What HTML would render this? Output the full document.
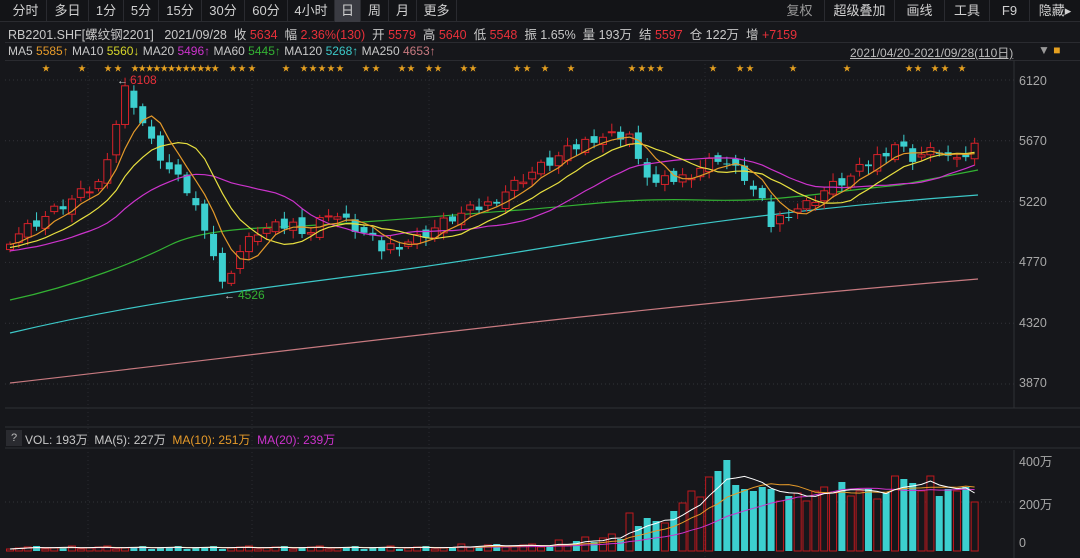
<!DOCTYPE html>
<html><head><meta charset="utf-8">
<style>
*{margin:0;padding:0;box-sizing:border-box}
body{width:1080px;height:558px;background:#16171b;overflow:hidden;font-family:"Liberation Sans","Noto Sans CJK SC",sans-serif;color:#c8c8c8;position:relative}
.tb{position:absolute;left:0;top:0;width:1080px;height:22px;background:#131417;border-bottom:1px solid #2a2b30}
.tb span{position:absolute;top:0;height:22px;line-height:22px;font-size:13px;color:#d0d0d0;text-align:center;border-right:1px solid #2a2b30}
.row{position:absolute;left:0;white-space:nowrap;font-size:12.5px}
.r{color:#e8303a}.o{color:#e59a2a}.y{color:#d6d62a}.m{color:#cc33cc}.g{color:#33b233}.c{color:#3cc8c8}.p{color:#c87a80}
.ax{position:absolute;left:1019px;font-size:12.5px;color:#a8a8a8}
</style></head><body>
<div class="tb">
<span style="left:5px;width:42px">分时</span>
<span style="left:47px;width:42px">多日</span>
<span style="left:89px;width:35px">1分</span>
<span style="left:124px;width:35px">5分</span>
<span style="left:159px;width:43px">15分</span>
<span style="left:202px;width:43px">30分</span>
<span style="left:245px;width:43px">60分</span>
<span style="left:288px;width:47px">4小时</span>
<span style="left:335px;width:26px;background:#3a3b42">日</span>
<span style="left:361px;width:28px">周</span>
<span style="left:389px;width:28px">月</span>
<span style="left:417px;width:40px">更多</span>
<span style="left:775px;width:50px;color:#999">复权</span>
<span style="left:825px;width:70px">超级叠加</span>
<span style="left:895px;width:50px">画线</span>
<span style="left:945px;width:45px">工具</span>
<span style="left:990px;width:40px">F9</span>
<span style="left:1030px;width:50px;border:none">隐藏▸</span>
</div>
<div class="row" style="top:24px;left:8px">RB2201.SHF[螺纹钢2201] &nbsp; 2021/09/28 &nbsp;收 <span class="r">5634</span> &nbsp;幅 <span class="r">2.36%(130)</span> &nbsp;开 <span class="r">5579</span> &nbsp;高 <span class="r">5640</span> &nbsp;低 <span class="r">5548</span> &nbsp;振 1.65% &nbsp;量 193万 &nbsp;结 <span class="r">5597</span> &nbsp;仓 122万 &nbsp;增 <span class="r">+7159</span></div>
<div style="position:absolute;left:5px;top:42px;width:1075px;height:1px;background:#2a2b30"></div>
<div class="row" style="top:44px;left:8px;font-size:12px">MA5 <span class="o">5585↑</span> MA10 <span class="y">5560↓</span> MA20 <span class="m">5496↑</span> MA60 <span class="g">5445↑</span> MA120 <span class="c">5268↑</span> MA250 <span class="p">4653↑</span></div>
<div class="row" style="top:44px;left:850px;font-size:12px;color:#bbb;text-decoration:underline">2021/04/20-2021/09/28(110日)</div>
<div class="row" style="top:43px;left:1038px;font-size:12px;color:#999">▼ <span style="color:#e5a020">■</span></div>
<div style="position:absolute;left:5px;top:60px;width:1075px;height:1px;background:#2a2b30"></div>
<div class="ax" style="top:74px">6120</div>
<div class="ax" style="top:134px">5670</div>
<div class="ax" style="top:195px">5220</div>
<div class="ax" style="top:255px">4770</div>
<div class="ax" style="top:316px">4320</div>
<div class="ax" style="top:376px">3870</div>
<div class="ax" style="top:451px">400万</div>
<div class="ax" style="top:494px">200万</div>
<div class="ax" style="top:536px">0</div>
<div style="position:absolute;left:6px;top:430px;width:16px;height:16px;background:#2a2b30;color:#bbb;font-size:11px;text-align:center;line-height:16px">?</div>
<div class="row" style="top:431px;left:25px;font-size:12px">VOL: 193万 &nbsp;MA(5): 227万 &nbsp;<span class="o">MA(10): 251万</span> &nbsp;<span class="m">MA(20): 239万</span></div>
<svg id="s" width="1080" height="558" style="position:absolute;left:0;top:0" xmlns="http://www.w3.org/2000/svg"></svg>
<script>
var s=document.getElementById('s'),h='';
function Y(p){return 80+(6120-p)*(304/2250);}
h+='<line x1="1014" y1="60" x2="1014" y2="408" stroke="#2f3035"/>';
h+='<line x1="1014" y1="450" x2="1014" y2="558" stroke="#2f3035"/>';
h+='<line x1="5" y1="408" x2="1080" y2="408" stroke="#2f3035"/>';
h+='<line x1="5" y1="427" x2="1080" y2="427" stroke="#2f3035"/>';
h+='<line x1="5" y1="448" x2="1080" y2="448" stroke="#2f3035"/>';
[6120,5670,5220,4770,4320,3870].forEach(function(p){var y=Y(p);h+='<line x1="5" y1="'+y+'" x2="1014" y2="'+y+'" stroke="#33343a" stroke-dasharray="1,3"/>';});
h+='<line x1="5" y1="502" x2="1014" y2="502" stroke="#33343a" stroke-dasharray="1,3"/>';
[88,252,429,705].forEach(function(x){h+='<line x1="'+x+'" y1="60" x2="'+x+'" y2="558" stroke="#2a2b30" stroke-dasharray="1,3"/>';});
var st=[46,82,108,118,233,242,252,286,304,313,322,331,340,366,376,402,411,429,438,464,473,517,527,545,571,632,642,651,660,713,740,750,793,847,909,918,935,945,962];
for(var q=0;q<12;q++)st.push(135+q*7.3);
st.forEach(function(x){h+='<text x="'+x+'" y="71" fill="#e5a020" font-size="8" text-anchor="middle">★</text>';});
var k=[[0,4950],[5,5150],[10,5350],[12,5800],[13,6050],[14,5950],[16,5650],[18,5450],[20,5300],[22,5050],[24,4600],[26,4850],[28,5000],[32,5050],[34,5000],[36,5150],[40,4980],[42,4870],[46,4950],[50,5100],[54,5200],[58,5400],[62,5550],[66,5700],[70,5720],[71,5500],[73,5350],[76,5400],[80,5550],[83,5400],[85,5200],[86,5050],[88,5150],[90,5200],[92,5300],[95,5400],[98,5550],[100,5650],[102,5550],[105,5600],[107,5500],[109,5634]];
var N=110,C=[];
for(var i=0;i<N;i++){for(var j=0;j<k.length-1;j++){if(i>=k[j][0]&&i<=k[j+1][0]){var t=(i-k[j][0])/((k[j+1][0]-k[j][0])||1);C[i]=k[j][1]+(k[j+1][1]-k[j][1])*t;break;}}}
for(i=0;i<N;i++)C[i]+=((i*37)%11-5)*9;
function X(i){return 10+i*8.85;}
function ma(n,pre){var a=[];for(var i=0;i<N;i++){var sm=0;for(var q=i-n+1;q<=i;q++)sm+=q<0?pre+(C[0]-pre)*(1+q/n):C[q];a.push(sm/n);}return a;}
function line(a,col){var d='';a.forEach(function(v,i){d+=(i?'L':'M')+X(i).toFixed(1)+' '+Y(v).toFixed(1);});return '<path d="'+d+'" fill="none" stroke="'+col+'" stroke-width="1.2"/>';}
h+='<path d="M10 383 C300 350 600 310 978 279" fill="none" stroke="#c87a80" stroke-width="1.2"/>';
h+='<path d="M10 333 C150 300 250 290 400 270 S700 215 978 195" fill="none" stroke="#3cc8c8" stroke-width="1.2"/>';
h+='<path d="M10 300 C80 285 140 260 170 245 S250 228 300 226 S450 215 520 210 S620 198 700 200 S800 195 900 185 L978 170" fill="none" stroke="#33b233" stroke-width="1.2"/>';
var O=[];for(i=0;i<N;i++){O[i]=i?C[i-1]+((i*53)%7-3)*12:C[0]-40;}
for(i=0;i<N;i++){var o=O[i],c=C[i],hi=Math.max(o,c)+20+(i*13%5)*10,lo=Math.min(o,c)-20-(i*7%5)*10;var up=c>=o,col=up?'#d8222a':'#3ccfcf',x=X(i);
h+='<line x1="'+x+'" y1="'+Y(hi)+'" x2="'+x+'" y2="'+Y(lo)+'" stroke="'+col+'"/>';
var yt=Y(Math.max(o,c)),hh=Math.max(1,Y(Math.min(o,c))-yt);
h+=up?'<rect x="'+(x-3.5)+'" y="'+yt+'" width="7" height="'+hh+'" fill="#16171b" stroke="'+col+'"/>':'<rect x="'+(x-3.5)+'" y="'+yt+'" width="7" height="'+hh+'" fill="'+col+'"/>';}
h+=line(ma(20,4800),'#cc33cc')+line(ma(10,4850),'#e8e040')+line(ma(5,4900),'#e59a2a');
h+='<text x="130" y="84" fill="#e8303a" font-size="12">6108</text><text x="117" y="84" fill="#ccc" font-size="11">←</text>';
h+='<text x="238" y="299" fill="#33b233" font-size="12">4526</text><text x="224" y="299" fill="#ccc" font-size="11">←</text>';
// volume (px heights)
var late=[38,25,33,30,28,40,48,60,54,74,80,91,66,62,60,64,62,50,55,58,50,60,64,58,69,55,60,62,52,58,75,72,68,60,75,55,62,60,64,49];
var V=[];for(i=0;i<N;i++){V[i]=i<62?2+(i%4)+(i>50?2:0):(i<70?5+(i%3)*3+(i-62):late[i-70]);}
var B=551;
for(i=0;i<N;i++){var x=X(i),up=C[i]>=O[i],vh=V[i];
h+=up?'<rect x="'+(x-3.5)+'" y="'+(B-vh)+'" width="7" height="'+vh+'" fill="#16171b" stroke="#c0181e"/>':'<rect x="'+(x-3.5)+'" y="'+(B-vh)+'" width="7" height="'+vh+'" fill="#3ccfcf"/>';}
function vma(n,col){var d='';for(var i=0;i<N;i++){var sm=0,c=0;for(var q=Math.max(0,i-n+1);q<=i;q++){sm+=V[q];c++;}d+=(i?'L':'M')+X(i).toFixed(1)+' '+(B-sm/c).toFixed(1);}return '<path d="'+d+'" fill="none" stroke="'+col+'" stroke-width="1"/>';}
h+=vma(20,'#cc33cc')+vma(10,'#e59a2a')+vma(5,'#ffffff');
s.innerHTML=h;
</script>
</body></html>
